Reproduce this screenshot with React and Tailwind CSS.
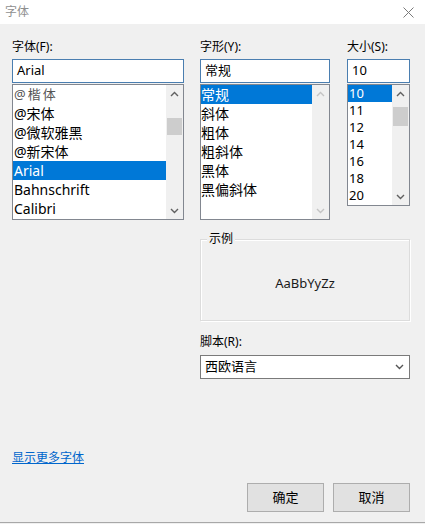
import React from "react";

const FONT = { fontFamily: '"Noto Sans", "Noto Sans CJK SC", sans-serif' };

function Chevron({ dir = "up", color = "#606060" }) {
  return (
    <svg width="9" height="6" viewBox="0 0 9 6">
      {dir === "up" ? (
        <path d="M1 5 L4.5 1.5 L8 5" fill="none" stroke={color} strokeWidth="1.4" />
      ) : (
        <path d="M1 1 L4.5 4.5 L8 1" fill="none" stroke={color} strokeWidth="1.4" />
      )}
    </svg>
  );
}

function ScrollBar({ thumbTop, thumbH, disabled }) {
  const c = disabled ? "#c4c4c4" : "#606060";
  return (
    <div className="w-[17px] h-full flex flex-col bg-[#f0f0f0]">
      <div className="h-[17px] flex items-center justify-center">
        <Chevron dir="up" color={c} />
      </div>
      <div className="flex-1 flex flex-col px-px">
        {!disabled && (
          <div
            className="w-full bg-[#cdcdcd]"
            style={{ marginTop: thumbTop, height: thumbH }}
          />
        )}
      </div>
      <div className="h-[17px] flex items-center justify-center">
        <Chevron dir="down" color={c} />
      </div>
    </div>
  );
}

function ListBox({ items, selected, h, rowH, textSize, thumbTop, thumbH, disabled, pl }) {
  return (
    <div
      className="bg-white border border-[#828790] flex"
      style={{ height: h }}
    >
      <div className="flex-1 flex flex-col overflow-hidden">
        {items.map((it, i) => (
          <div
            key={i}
            className={
              "flex items-center whitespace-nowrap " +
              (i === selected ? "bg-[#0078d7] text-white" : "text-black")
            }
            style={{ height: rowH, fontSize: textSize, paddingLeft: pl }}
          >
            {it}
          </div>
        ))}
      </div>
      <ScrollBar thumbTop={thumbTop} thumbH={thumbH} disabled={disabled} />
    </div>
  );
}

function TextInput({ value }) {
  return (
    <div className="h-[24px] bg-white border border-[#4a7eb0] flex items-center pl-[4px] text-[13px] text-black">
      {value}
    </div>
  );
}

export default function App() {
  return (
    <div
      className="w-[425px] h-[524px] bg-[#f0f0f0] flex flex-col text-[12px] text-black"
      style={FONT}
    >
      {/* Title bar */}
      <div className="h-[24px] bg-white flex items-center justify-between pl-[5px] pr-[11px] shrink-0">
        <span className="text-[12px] text-[#8f8f8f]">字体</span>
        <svg width="11" height="11" viewBox="0 0 11 11">
          <path d="M0.5 0.5 L10.5 10.5 M10.5 0.5 L0.5 10.5" stroke="#7a7a7a" strokeWidth="1" />
        </svg>
      </div>

      {/* Columns */}
      <div className="flex pl-[12px] pt-[15px] shrink-0">
        <div className="w-[172px] flex flex-col">
          <div className="h-[16px] leading-[16px] mb-[4px]">字体(F):</div>
          <TextInput value="Arial" />
          <div className="mt-px">
            <ListBox
              items={[
                <span className="text-[#555] tracking-[2px] text-[13px]">@楷体</span>,
                "@宋体",
                "@微软雅黑",
                "@新宋体",
                "Arial",
                "Bahnschrift",
                "Calibri",
              ]}
              selected={4}
              h={136}
              rowH={19}
              textSize={14}
              thumbTop={16}
              thumbH={17}
              pl={1}
            />
          </div>
        </div>

        <div className="w-[130px] ml-[16px] flex flex-col">
          <div className="h-[16px] leading-[16px] mb-[4px]">字形(Y):</div>
          <TextInput value="常规" />
          <div className="mt-px">
            <ListBox
              items={["常规", "斜体", "粗体", "粗斜体", "黑体", "黑偏斜体"]}
              selected={0}
              h={136}
              rowH={19}
              textSize={14}
              disabled
              pl={0}
            />
          </div>
        </div>

        <div className="w-[63px] ml-[17px] flex flex-col">
          <div className="h-[16px] leading-[16px] mb-[4px]">大小(S):</div>
          <TextInput value="10" />
          <div className="mt-px">
            <ListBox
              items={["10", "11", "12", "14", "16", "18", "20"]}
              selected={0}
              h={122}
              rowH={17}
              textSize={13}
              thumbTop={5}
              thumbH={19}
              pl={1}
            />
          </div>
        </div>
      </div>

      {/* Right lower section */}
      <div className="ml-[200px] w-[210px] flex flex-col mt-[19px] shrink-0">
        <div className="relative h-[82px] border border-[#dcdcdc] shadow-[inset_1px_1px_0_#ffffff,1px_1px_0_#ffffff] flex items-center justify-center">
          <span className="absolute left-[6px] top-[-9px] px-[2px] bg-[#f0f0f0] leading-[16px]">
            示例
          </span>
          <span className="text-[13px] text-[#1a1a1a] mt-[8px]">AaBbYyZz</span>
        </div>
        <div className="h-[16px] leading-[16px] mt-[13px]">脚本(R):</div>
        <div className="mt-[5px] h-[24px] bg-white border border-[#7a7a7a] flex items-center justify-between pl-[4px] pr-[5px] text-[13px]">
          <span>西欧语言</span>
          <Chevron dir="down" color="#555555" />
        </div>
      </div>

      {/* Link */}
      <div className="pl-[12px] mt-[71px] h-[16px] leading-[16px] shrink-0">
        <span className="text-[#0066cc] underline">显示更多字体</span>
      </div>

      {/* Buttons */}
      <div className="flex justify-end pr-[15px] gap-[9px] mt-[17px] shrink-0">
        <div className="w-[77px] h-[29px] bg-[#e1e1e1] border border-[#adadad] flex items-center justify-center text-[13px]">
          确定
        </div>
        <div className="w-[77px] h-[29px] bg-[#e1e1e1] border border-[#adadad] flex items-center justify-center text-[13px]">
          取消
        </div>
      </div>

      <div className="mt-auto mb-[1px] h-px bg-[#a8a8a8] shrink-0" />
    </div>
  );
}
